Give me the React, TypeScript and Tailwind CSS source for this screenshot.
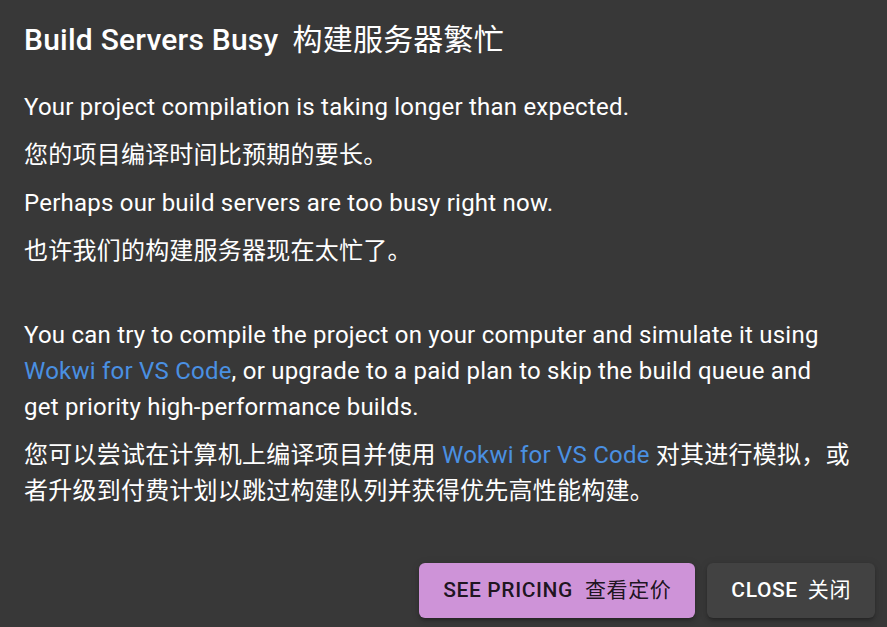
import React from "react";

const font = "font-['Roboto','Noto_Sans_CJK_SC',sans-serif]";

const App = () => {
  return (
    <div className={`w-[887px] h-[627px] bg-[#383838] text-white flex flex-col ${font}`}>
      <h2 className="px-6 pt-4 text-[30px] leading-[48px] font-medium tracking-[0.0075em]">
        Build Servers Busy<span className="ml-[14px] font-normal">构建服务器繁忙</span>
      </h2>
      <div className="pl-6 pr-[36px] pt-[25px] pb-[30px] text-[24px] leading-[36px] tracking-[0.00938em]">
        <p className="mb-3">Your project compilation is taking longer than expected.</p>
        <p className="mb-3">您的项目编译时间比预期的要长。</p>
        <p className="mb-3">Perhaps our build servers are too busy right now.</p>
        <p className="mb-3">也许我们的构建服务器现在太忙了。</p>
        <div className="h-9"></div>
        <p className="mb-3">
          You can try to compile the project on your computer and simulate it using{" "}
          <a className="text-[#4a90e2]">Wokwi for VS Code</a>, or upgrade to a paid plan to skip
          the build queue and get priority high-performance builds.
        </p>
        <p className="mb-3">
          您可以尝试在计算机上编译项目并使用 <a className="text-[#4a90e2]">Wokwi for VS Code</a>{" "}
          对其进行模拟，或者升级到付费计划以跳过构建队列并获得优先高性能构建。
        </p>
      </div>
      <div className="flex justify-end gap-3 px-3 pt-3 pb-[13px]">
        <button className="h-[55px] px-6 rounded-[6px] bg-[#ce93d8] text-[rgba(0,0,0,0.87)] text-[21px] font-medium tracking-[0.02857em] uppercase shadow-[0_3px_3px_-2px_rgba(0,0,0,0.2),0_3px_4px_0_rgba(0,0,0,0.14),0_1px_8px_0_rgba(0,0,0,0.12)]">
          See Pricing<span className="ml-3 font-normal">查看定价</span>
        </button>
        <button className="h-[55px] px-6 rounded-[6px] bg-[#424242] text-white text-[21px] font-medium tracking-[0.02857em] uppercase shadow-[0_3px_3px_-2px_rgba(0,0,0,0.2),0_3px_4px_0_rgba(0,0,0,0.14),0_1px_8px_0_rgba(0,0,0,0.12)]">
          Close<span className="ml-[10px] font-normal">关闭</span>
        </button>
      </div>
    </div>
  );
};

export default App;
